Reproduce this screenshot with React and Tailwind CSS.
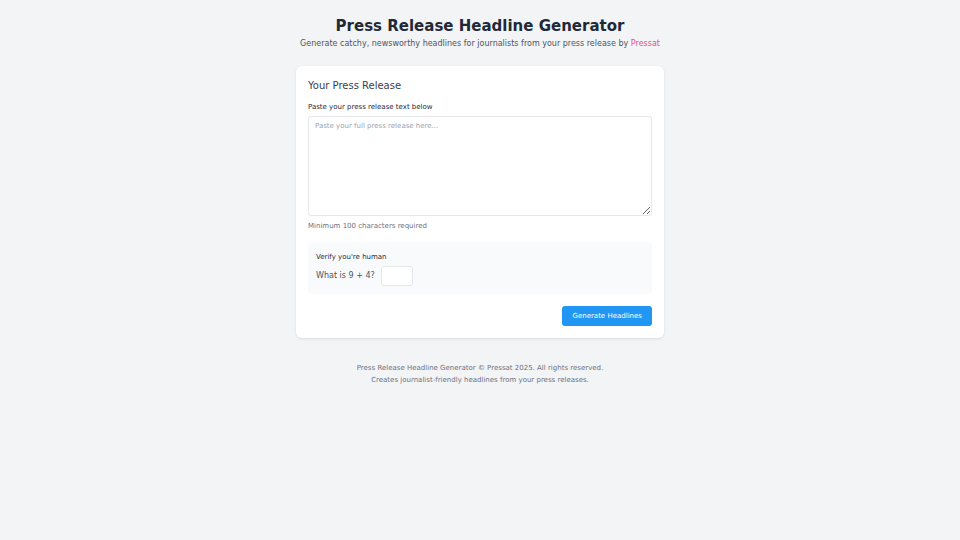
export default function App() {
  return (
    <main
      style={{ fontFamily: '"DejaVu Sans", sans-serif' }}
      className="w-full min-h-screen bg-[#f3f4f6] flex flex-col items-center pt-[16px]"
    >
      <header className="text-center">
        <h1 className="text-[15px] leading-[20px] font-bold text-[#1f2937]">
          Press Release Headline Generator
        </h1>
        <p className="mt-[2px] text-[8px] leading-[12px] text-[#4b5563]">
          Generate catchy, newsworthy headlines for journalists from your press release by{" "}
          <span className="text-[#ec4899]">Pressat</span>
        </p>
      </header>

      <section className="mt-[16px] w-[368px] bg-white rounded-[6px] shadow-[0_1px_3px_rgba(0,0,0,0.1)] p-[12px]">
        <h2 className="mt-[1px] text-[10px] leading-[14px] text-[#374151]">Your Press Release</h2>

        <label className="block mt-[9px] text-[7px] leading-[10px] font-medium text-[#1f2937]">
          Paste your press release text below
        </label>
        <textarea
          placeholder="Paste your full press release here..."
          className="mt-[4px] block w-full h-[100px] border border-[#e5e7eb] rounded-[3px] px-[6px] py-[4px] text-[7px] leading-[10px] placeholder:text-[#9ca3af] resize-y"
        />
        <p className="mt-[5px] text-[7px] leading-[10px] text-[#6b7280]">Minimum 100 characters required</p>

        <div className="mt-[11px] bg-[#f9fafb] rounded-[4px] px-[8px] pt-[10px] pb-[8px]">
          <p className="text-[7px] leading-[10px] text-[#1f2937]">Verify you're human</p>
          <div className="mt-[4px] flex items-center gap-[6px]">
            <span className="text-[8px] text-[#4b5563]">What is 9 + 4?</span>
            <input className="w-[32px] h-[20px] bg-white border border-[#e5e7eb] rounded-[3px]" />
          </div>
        </div>

        <div className="mt-[12px] flex justify-end">
          <button className="h-[20px] px-[10px] bg-[#2196f3] text-white text-[7px] rounded-[3px]">
            Generate Headlines
          </button>
        </div>
      </section>

      <footer className="mt-[24px] text-center text-[7px] leading-[12px] text-[#6b7280]">
        <p>Press Release Headline Generator © Pressat 2025. All rights reserved.</p>
        <p>Creates journalist-friendly headlines from your press releases.</p>
      </footer>
    </main>
  );
}
